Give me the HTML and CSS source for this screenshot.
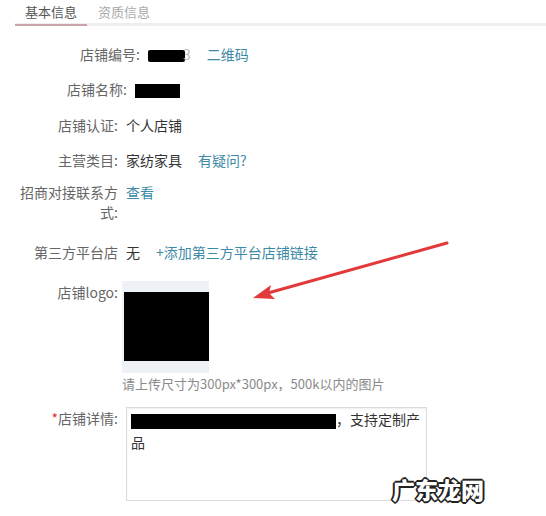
FILE: index.html
```html
<!DOCTYPE html>
<html lang="zh-CN">
<head>
  <meta charset="UTF-8">
  <title>店铺信息</title>
  <link rel="stylesheet" href="styles.css">
</head>
<body>
  <div class="tabs">
    <span class="tab active">基本信息</span>
    <span class="tab">资质信息</span>
  </div>

  <div class="form">
    <div class="row shift-1">
      <span class="label">店铺编号:</span>
      <span class="value"><span class="mask mask-id"></span><span class="faint">3</span><a class="link gap-l">二维码</a></span>
    </div>
    <div class="row shift-2">
      <span class="label">店铺名称:</span>
      <span class="value"><span class="mask mask-name"></span></span>
    </div>
    <div class="row">
      <span class="label">店铺认证:</span>
      <span class="value">个人店铺</span>
    </div>
    <div class="row">
      <span class="label">主营类目:</span>
      <span class="value">家纺家具<a class="link gap-l">有疑问?</a></span>
    </div>
    <div class="row row-contact">
      <span class="label">招商对接联系方式:</span>
      <span class="value"><a class="link">查看</a></span>
    </div>
    <div class="row">
      <span class="label">第三方平台店</span>
      <span class="value">无<a class="link gap-l">+添加第三方平台店铺链接</a></span>
    </div>
    <div class="row row-logo">
      <span class="label">店铺logo:</span>
      <div class="value">
        <div class="logo-box"><div class="logo"></div></div>
        <div class="hint">请上传尺寸为300px*300px，500k以内的图片</div>
      </div>
    </div>
    <div class="row row-detail">
      <span class="label"><span class="req">*</span>店铺详情:</span>
      <div class="value">
        <div class="textarea"><span class="mask mask-detail"></span>，支持定制产品</div>
      </div>
    </div>
  </div>

  <svg class="arrow" width="546" height="516" viewBox="0 0 546 516">
    <path d="M447 243 L268 293" stroke="#e23a3a" stroke-width="3" stroke-linecap="round" fill="none"/>
    <path d="M253 298 L271 285 L269 293 L275 299 Z" fill="#e23a3a"/>
  </svg>

  <div class="watermark">广东龙网</div>
</body>
</html>
```

FILE: styles.css
```css
body {
  margin: 0;
  background: #fff;
  color: #333;
  font-family: "Noto Sans CJK SC", "Liberation Sans", sans-serif;
  font-size: 14px;
  width: 546px;
  height: 516px;
  overflow: hidden;
  position: relative;
}
.tabs {
  display: flex;
  height: 23px;
  margin-left: 15px;
  border-bottom: 3px solid #eeeeee;
}
.tab {
  font-size: 13px;
  line-height: 23px;
  color: #aaa;
  padding: 0 0 0 11px;
}
.tab.active {
  color: #555;
  padding: 0 10px;
  border-bottom: 2px solid #caa3ab;
  margin-bottom: -3px;
}
.form {
  padding: 18px 0 0 18px;
}
.row {
  display: flex;
  gap: 8px;
  line-height: 20px;
  margin-bottom: 15px;
}
.label {
  width: 100px;
  flex: none;
  text-align: right;
  color: #666;
}
.value {
  color: #333;
}
.shift-1 { padding-left: 22px; margin-bottom: 15px; }
.shift-2 { padding-left: 9px; margin-bottom: 16px; }
.link {
  color: #3d8aa6;
  cursor: pointer;
}
.gap-l { margin-left: 16px; }
.mask {
  display: inline-block;
  background: #000;
  vertical-align: middle;
}
.mask-id { width: 37px; height: 12px; border-radius: 2px; }
.mask-name { width: 45px; height: 14px; }
.faint { color: #bbb; margin-left: -2px; }
.row-contact { margin-top: -3px; margin-bottom: 20px; }
.row-logo { margin-top: 20px; margin-bottom: 13px; }
.logo-box {
  width: 87px;
  height: 92px;
  margin-left: -4px;
  margin-top: -1px;
  background: #eef1f6;
  padding-top: 11px;
  box-sizing: border-box;
}
.logo {
  width: 85px;
  height: 69px;
  margin-left: 2px;
  background: #000;
}
.hint {
  margin-left: -4px;
  margin-top: 1px;
  color: #8a8a8a;
  font-size: 13px;
  line-height: 20px;
}
.req { color: #d33; }
.row-detail .label { padding-top: 1px; }
.textarea {
  width: 301px;
  height: 94px;
  box-sizing: border-box;
  border: 1px solid #dcdcdc;
  box-shadow: inset 0 1px 2px #eee;
  padding: 0 4px 0 4px;
  line-height: 23px;
  color: #333;
}
.mask-detail { width: 205px; height: 15px; }
.arrow {
  position: absolute;
  left: 0;
  top: 0;
  pointer-events: none;
}
.watermark {
  position: absolute;
  left: 392px;
  top: 472px;
  font-size: 23px;
  font-weight: 900;
  color: #fff;
  letter-spacing: 0;
  text-shadow:
    -2px 0 0 #222, 2px 0 0 #222, 0 -2px 0 #222, 0 2px 0 #222,
    -1px -1px 0 #222, 1px -1px 0 #222, -1px 1px 0 #222, 1px 1px 0 #222;
}
```
